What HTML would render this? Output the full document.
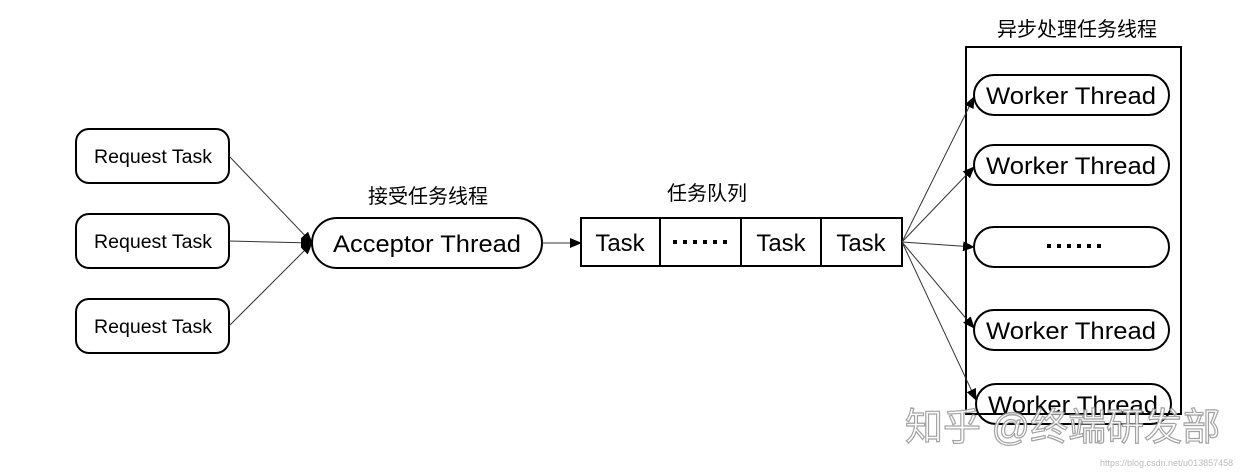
<!DOCTYPE html>
<html><head><meta charset="utf-8"><style>
html,body{margin:0;padding:0;background:#fff;width:1240px;height:472px;overflow:hidden}
svg{display:block}
text{font-family:"Liberation Sans","Noto Sans CJK SC",sans-serif;fill:#000}
</style></head><body>
<svg width="1240" height="472" viewBox="0 0 1240 472" xmlns="http://www.w3.org/2000/svg">
<defs><marker id="a" markerWidth="12" markerHeight="10" refX="11" refY="5" orient="auto" markerUnits="userSpaceOnUse"><path d="M0,0 L12,5 L0,10 z" fill="#000"/></marker></defs>
<g fill="none" stroke="#000" stroke-width="2">
<rect x="76" y="129" width="153" height="54" rx="13"/>
<rect x="76" y="214" width="153" height="54" rx="13"/>
<rect x="76" y="299" width="153" height="54" rx="13"/>
<rect x="312" y="218" width="230" height="50" rx="25"/>
<rect x="581" y="218" width="321" height="48"/>
<line x1="660" y1="218" x2="660" y2="266"/><line x1="741" y1="218" x2="741" y2="266"/><line x1="821" y1="218" x2="821" y2="266"/>
<rect x="966" y="47" width="215" height="367"/>
<rect x="974" y="75" width="195" height="40" rx="20"/>
<rect x="974" y="145" width="195" height="40" rx="20"/>
<rect x="974" y="227" width="195" height="40" rx="20"/>
<rect x="974" y="310" width="195" height="40" rx="20"/>
<rect x="976" y="384" width="195" height="40" rx="20"/>
</g>
<g stroke="#333" stroke-width="1" marker-end="url(#a)">
<line x1="229" y1="156" x2="312" y2="243"/>
<line x1="229" y1="241" x2="312" y2="243"/>
<line x1="229" y1="326" x2="312" y2="243"/>
<line x1="542" y1="243" x2="581" y2="243"/>
<line x1="902" y1="242" x2="974" y2="97"/>
<line x1="902" y1="242" x2="974" y2="167"/>
<line x1="902" y1="242" x2="974" y2="247"/>
<line x1="902" y1="242" x2="974" y2="328"/>
<line x1="902" y1="242" x2="976" y2="400"/>
</g>
<g fill="#000">
<rect x="673" y="240" width="4" height="4"/><rect x="683" y="240" width="4" height="4"/><rect x="693" y="240" width="4" height="4"/><rect x="703" y="240" width="4" height="4"/><rect x="713" y="240" width="4" height="4"/><rect x="723" y="240" width="4" height="4"/>
<rect x="1047" y="244" width="4" height="4"/><rect x="1057" y="244" width="4" height="4"/><rect x="1067" y="244" width="4" height="4"/><rect x="1077" y="244" width="4" height="4"/><rect x="1087" y="244" width="4" height="4"/><rect x="1097" y="244" width="4" height="4"/>
</g>
<g font-size="19" text-anchor="middle">
<text x="153" y="163" textLength="118" lengthAdjust="spacingAndGlyphs">Request Task</text>
<text x="153" y="248" textLength="118" lengthAdjust="spacingAndGlyphs">Request Task</text>
<text x="153" y="333" textLength="118" lengthAdjust="spacingAndGlyphs">Request Task</text>
</g>
<g font-size="24" text-anchor="middle">
<text x="427" y="252" textLength="188" lengthAdjust="spacingAndGlyphs">Acceptor Thread</text>
<text x="620" y="251">Task</text>
<text x="781" y="251">Task</text>
<text x="861" y="251">Task</text>
<text x="1071" y="104" textLength="170" lengthAdjust="spacingAndGlyphs">Worker Thread</text>
<text x="1071" y="174" textLength="170" lengthAdjust="spacingAndGlyphs">Worker Thread</text>
<text x="1071" y="339" textLength="170" lengthAdjust="spacingAndGlyphs">Worker Thread</text>
<text x="1073" y="413" textLength="170" lengthAdjust="spacingAndGlyphs">Worker Thread</text>
</g>
<g font-size="20" text-anchor="middle">
<text x="428" y="203">接受任务线程</text>
<text x="707" y="200">任务队列</text>
<text x="1077" y="36">异步处理任务线程</text>
</g>
<text x="905" y="440" font-size="38" style="fill:#fff;stroke:#999;stroke-width:1.2;opacity:.9">知乎 @终端研发部</text>
<text x="1100" y="466" font-size="9" style="fill:#bbb">https://blog.csdn.net/u013857458</text>
</svg>
</body></html>
